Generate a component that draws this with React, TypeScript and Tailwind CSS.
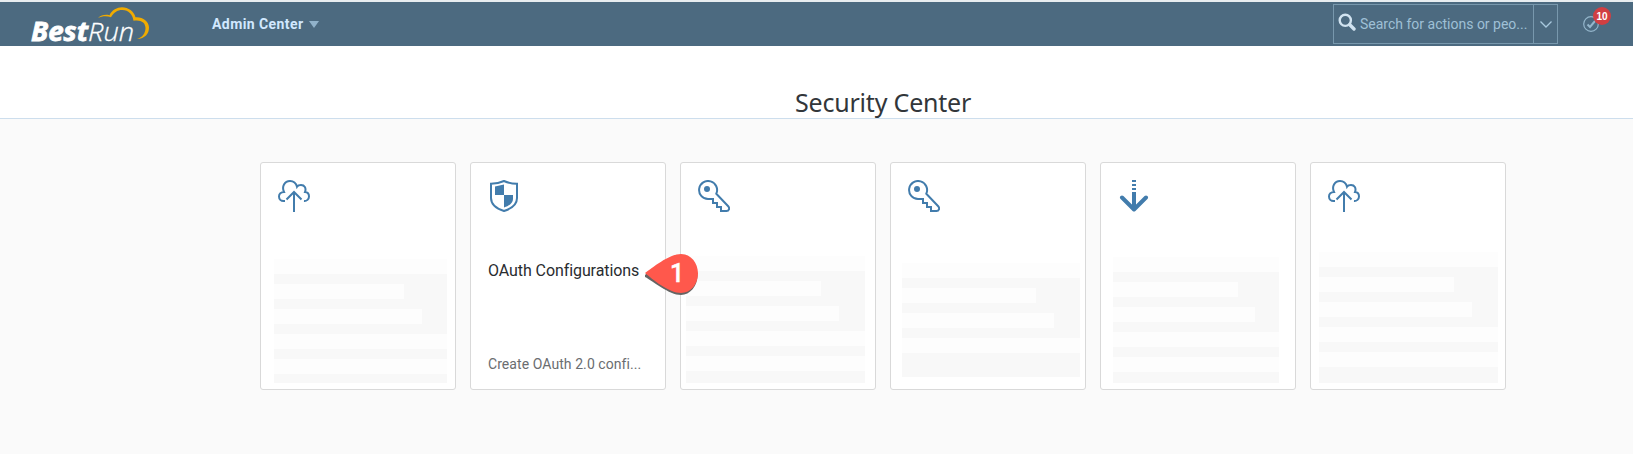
import React from "react";

type Icon = "cloud" | "shield" | "key" | "down";

function TileIcon({ kind }: { kind: Icon }) {
  if (kind === "cloud")
    return (
      <svg width="32" height="32" viewBox="0 0 32 32" fill="none" stroke="#427cac" strokeWidth="2">
        <path d="M7 21H5.500A4.500 4.500 0 0 1 1 16.500C1 14 3 12 6 12C3.500 6.500 6.500 1 12 1C15.500 1 18 3 19 6.800C20 5.300 21.500 5 23 5C26.500 5 28.500 8 27 12C29.500 12.200 31 14 31 16.500A4.500 4.500 0 0 1 26 21" />
        <path d="M16 12V32M8.500 19.500L16 12L23.500 19.500" />
      </svg>
    );
  if (kind === "shield")
    return (
      <svg width="32" height="32" viewBox="0 0 32 32" fill="none" stroke="#427cac" strokeWidth="2">
        <path d="M3 3.800C8 3.600 12 2.800 16 1C20 2.800 24 3.600 29 3.800V18C29 24 24 28.500 16 31C8 28.500 3 24 3 18Z" />
        <path d="M7 6.600L16 4.500V15H7ZM16 15H25V19C25 23 21.500 25.500 16 27.500Z" fill="#427cac" stroke="none" />
      </svg>
    );
  if (kind === "key")
    return (
      <svg width="32" height="32" viewBox="0 0 32 32" fill="none" stroke="#427cac" strokeWidth="2">
        <path d="M18.300 13.700A9 9 0 1 0 10 19H15V23H19V27H23V31H28.500C31 31 32 28.500 30.200 26.200Z" />
        <circle cx="9" cy="9" r="3" fill="#427cac" stroke="none" />
      </svg>
    );
  return (
    <svg width="32" height="32" viewBox="0 0 32 32" fill="none" stroke="#427cac" strokeWidth="4">
      <path d="M16 0V2M16 4V6M16 8V10M16 12V29" />
      <path d="M4 17.500L16 29.500L28 17.500" strokeLinecap="round" strokeLinejoin="round" />
    </svg>
  );
}

function Placeholder({ box, second, third, fifth = true }: { box: string; second: string; third: string; fifth?: boolean }) {
  return (
    <div className={`flex flex-col gap-[10px] bg-[#f8f8f8] ${box}`}>
      <div className="h-[15px] bg-[#fdfdfd]" />
      <div className={`h-[15px] bg-[#fdfdfd] ${second}`} />
      <div className={`h-[15px] bg-[#fdfdfd] ${third}`} />
      <div className="h-[15px] bg-[#fdfdfd]" />
      {fifth && <div className="h-[15px] bg-[#fdfdfd]" />}
    </div>
  );
}

function Tile({ icon, children }: { icon: Icon; children: React.ReactNode }) {
  return (
    <section className="relative h-[228px] w-[196px] shrink-0 rounded-[3px] border border-[#d9d9d9] bg-white">
      <div className="h-[49px] pt-[17px] pl-[17px]">
        <TileIcon kind={icon} />
      </div>
      {children}
    </section>
  );
}

function Logo() {
  return (
    <svg width="122" height="38" viewBox="0 0 122 38" className="block overflow-visible">
      <path d="M68 11C71 8.200 75 7.300 79.500 8.200C82 3 87 .3 92 .3C98.500 .3 104 4.500 105.500 10.200C112.500 9.600 119 14 119 20.500C119 27 115 31.500 107 32C112.500 30.500 115.500 26 115.500 21C115.500 15.500 111 12.500 103.500 13.700C102.500 7 98.500 3.200 92.500 3C87.500 2.900 83.500 5.500 81 10.300C77 8.700 72 9 68 11Z" fill="#f0ab00" />
      <text x="1" y="33.500" textLength="57" lengthAdjust="spacingAndGlyphs" fill="#fff" stroke="#fff" strokeWidth=".8" fontFamily="Open Sans" fontWeight="700" fontStyle="italic" fontSize="26">Best</text>
      <text x="58" y="33.500" textLength="46" lengthAdjust="spacingAndGlyphs" fill="#fff" stroke="#fff" strokeWidth=".3" fontFamily="Open Sans" fontWeight="300" fontStyle="italic" fontSize="26">Run</text>
    </svg>
  );
}

export default function App() {
  return (
    <div className="flex h-[454px] flex-col bg-[#fafafa] font-['Roboto',sans-serif]">
      <header className="flex h-[46px] shrink-0 items-start border-t-2 border-[#e8edf0] bg-[#4c6a80]">
        <div className="w-[212px] pt-[5px] pl-[30px]">
          <Logo />
        </div>
        <button className="flex h-[44px] items-center gap-[6px] text-[14px] font-bold tracking-[0.42px] text-[#d1e8ff]">
          <span className="w-[91px] text-left whitespace-nowrap">Admin Center</span>
          <svg width="10" height="7" viewBox="0 0 10 7"><path d="M0 0H10L5 7Z" fill="#91b2ca" /></svg>
        </button>
        <div className="mt-[2px] ml-auto flex h-[40px] w-[225px] border border-[#7898ad]">
          <div className="flex w-[200px] items-center border-r border-[#7898ad] pl-[4px]">
            <svg width="18" height="18" viewBox="0 0 18 18" fill="none" stroke="#d1e3f0" className="-mt-1 mr-[4px] shrink-0">
              <circle cx="7.300" cy="7.300" r="5.600" strokeWidth="2.400" />
              <path d="M11.800 11.800L16 16" strokeWidth="3.400" strokeLinecap="round" />
            </svg>
            <span className="text-[14px] whitespace-nowrap text-[#9fc0d6]">Search for actions or peo...</span>
          </div>
          <div className="flex flex-1 items-center justify-center">
            <svg width="12" height="7" viewBox="0 0 12 7" fill="none" stroke="#a9c9de" strokeWidth="1.300"><path d="M.5 .5L6 6L11.500 .5" /></svg>
          </div>
        </div>
        <div className="relative ml-[25px] w-[50px] pt-[14px]">
          <svg width="16" height="16" viewBox="0 0 16 16" fill="none" stroke="#94b6cb" strokeWidth="1.200">
            <circle cx="8" cy="8" r="7.300" />
            <path d="M4.500 8.500L7 11L12 5" strokeWidth="2" />
          </svg>
          <span className="absolute top-[5px] left-[10px] flex size-[18px] items-center justify-center rounded-full bg-[#d13f42] font-['Liberation_Sans'] text-[10px] font-bold text-white">10</span>
        </div>
      </header>
      <div className="h-[73px] shrink-0 border-b border-[#cddeed] bg-white pt-[39px] pl-[795px]">
        <h1 className="font-['Noto_Sans',sans-serif] text-[25px] leading-[34px] tracking-[-0.2px] whitespace-nowrap text-[#32363a]">Security Center</h1>
      </div>
      <main className="flex gap-[14px] pt-[43px] pl-[260px]">
        <Tile icon="cloud">
          <Placeholder box="ml-[13px] mt-[47px] h-[124px] w-[173px]" second="w-[130px]" third="w-[148px]" />
        </Tile>
        <Tile icon="shield">
          <h2 className="mt-[47px] ml-[17px] text-[16px] leading-[24px] tracking-[-0.08px] whitespace-nowrap text-[#292c2f]">OAuth Configurations</h2>
          <p className="mt-[71px] ml-[17px] text-[14px] leading-[20px] tracking-[0.07px] whitespace-nowrap text-[#6a6d70]">Create OAuth 2.0 confi...</p>
          <svg className="absolute top-[90px] left-[172px] z-10" width="56" height="43" viewBox="0 0 56 43">
            <path d="M2 22C8 17 26 3 38 3C48 3 54.500 12 54.500 22.500C54.500 33 47 42 38 42C26 42 10 28 2 24Z" fill="#666463" />
            <path d="M2 20C9 15 26 1 38 1C48 1 55 10 55 20.500C55 31 48 40 38 40C26 40 9 26 2 20Z" fill="#ff584c" />
            <text x="34" y="29" textAnchor="middle" fill="#fff" stroke="#fff" strokeWidth=".4" fontFamily="Roboto" fontWeight="500" fontSize="25">1</text>
          </svg>
        </Tile>
        <Tile icon="key">
          <Placeholder box="ml-[5px] mt-[44px] h-[127px] w-[179px]" second="w-[135px]" third="w-[153px]" />
        </Tile>
        <Tile icon="key">
          <Placeholder box="ml-[11px] mt-[51px] h-[114px] w-[178px]" second="w-[134px]" third="w-[152px]" fifth={false} />
        </Tile>
        <Tile icon="down">
          <Placeholder box="ml-[12px] mt-[45px] h-[126px] w-[166px]" second="w-[125px]" third="w-[142px]" />
        </Tile>
        <Tile icon="cloud">
          <Placeholder box="ml-[8px] mt-[40px] h-[131px] w-[179px]" second="w-[135px]" third="w-[153px]" />
        </Tile>
      </main>
    </div>
  );
}
